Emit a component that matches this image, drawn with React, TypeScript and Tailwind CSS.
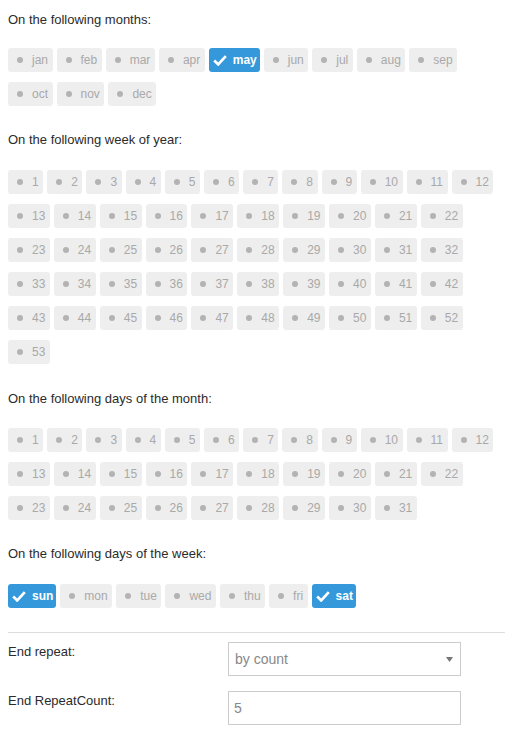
import React from 'react'

const months = ['jan', 'feb', 'mar', 'apr', 'may', 'jun', 'jul', 'aug', 'sep', 'oct', 'nov', 'dec']
const weekdays = ['sun', 'mon', 'tue', 'wed', 'thu', 'fri', 'sat']
const range = (n: number) => Array.from({ length: n }, (_, i) => String(i + 1))

function CheckIcon() {
  return (
    <svg width="14" height="11" viewBox="0 0 14 11" className="ml-[-2px]">
      <path d="M1.2 5.6 L5.2 9.4 L12.8 1.2" fill="none" stroke="#ffffff" strokeWidth="2.7" />
    </svg>
  )
}

function Chip({ label, checked = false }: { label: string; checked?: boolean }) {
  return (
    <span
      className={`flex h-[24px] items-center rounded-[3px] text-[12px] leading-[14px] ${
        checked ? 'bg-[#3498db] pr-[3px] font-bold text-white' : 'bg-[#eeeeee] pr-[4.5px] text-[#a9a9a9]'
      }`}
    >
      <span className="flex w-[24px] items-center justify-center">
        {checked ? (
          <CheckIcon />
        ) : (
          <span className="mt-[-1px] h-[6px] w-[6px] rounded-full bg-[#b3b3b3]" />
        )}
      </span>
      {label}
    </span>
  )
}

function ChipGroup({ items, selected = [] }: { items: string[]; selected?: string[] }) {
  return (
    <div className="flex flex-wrap gap-x-[4px] gap-y-[10px] pr-[4px]">
      {items.map((item) => (
        <Chip key={item} label={item} checked={selected.includes(item)} />
      ))}
    </div>
  )
}

function Label({ children, className = '' }: { children: React.ReactNode; className?: string }) {
  return <div className={`text-[13px] leading-[15px] text-[#2b2b2b] ${className}`}>{children}</div>
}

export default function App() {
  return (
    <div className="min-h-screen bg-white pl-[8px] pt-[12px] font-['Liberation_Sans',Arial,sans-serif]">
      {/* Months */}
      <Label>On the following months:</Label>
      <div className="mt-[21px]">
        <ChipGroup items={months} selected={['may']} />
      </div>

      {/* Week of year */}
      <Label className="mt-[26px]">On the following week of year:</Label>
      <div className="mt-[23px]">
        <ChipGroup items={range(53)} />
      </div>

      {/* Days of month */}
      <Label className="mt-[27px]">On the following days of the month:</Label>
      <div className="mt-[22px]">
        <ChipGroup items={range(31)} />
      </div>

      {/* Days of week */}
      <Label className="mt-[26px]">On the following days of the week:</Label>
      <div className="mt-[23px]">
        <ChipGroup items={weekdays} selected={['sun', 'sat']} />
      </div>

      <div className="mt-[24px] h-px bg-[#dddddd]" />

      {/* End repeat */}
      <div className="mt-[9px] grid grid-cols-[220px_233px] gap-y-[15px]">
        <Label className="pt-[2px]">End repeat:</Label>
        <div className="flex h-[34px] items-center justify-between border border-[#cccccc] bg-white pl-[6px] pr-[7px] text-[14px] text-[#888888]">
          <span>by count</span>
          <svg width="7" height="5" viewBox="0 0 7 5">
            <path d="M0 0 L7 0 L3.5 5 Z" fill="#777777" />
          </svg>
        </div>

        <Label className="pt-[2px]">End RepeatCount:</Label>
        <input
          defaultValue="5"
          className="h-[34px] w-full border border-[#cccccc] bg-white px-[5px] text-[14px] text-[#888888] outline-none"
        />
      </div>
    </div>
  )
}
